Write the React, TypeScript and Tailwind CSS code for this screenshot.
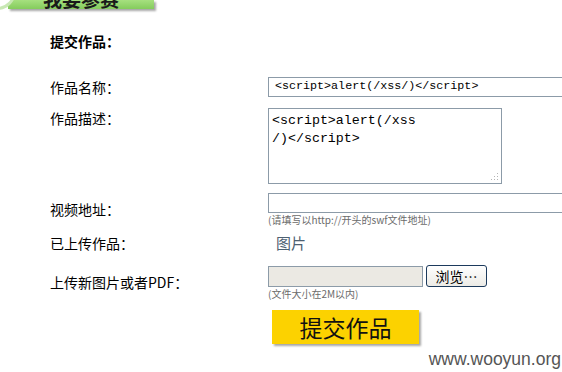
import React from "react";

const cjk = { fontFamily: '"SimSun", "Noto Sans CJK SC", sans-serif' };
const mono = { fontFamily: '"Liberation Mono", "Noto Sans CJK SC", monospace' };

function Row({ className, label, children }: { className: string; label: React.ReactNode; children: React.ReactNode }) {
  return (
    <div className={`grid grid-cols-[218px_1fr] ${className}`}>
      {label}
      {children}
    </div>
  );
}

function Label({ children }: { children: React.ReactNode }) {
  return <div className="flex items-center text-[14px] text-black">{children}</div>;
}

function Hint({ children }: { children: React.ReactNode }) {
  return <div className="mt-[1px] text-[10px] leading-[12px] text-[#6b6b6b]">{children}</div>;
}

export default function App() {
  return (
    <div className="relative h-[372px] w-[562px] overflow-hidden bg-white" style={cjk}>
      {/* TOP BANNER (cut off) */}
      <div className="relative h-[14px]">
        <div className="ml-[8px] h-[9px] w-[146px] overflow-hidden bg-gradient-to-b from-[#a6e07f] to-[#84cc5c] shadow-[2px_2px_2px_rgba(0,0,0,0.35)]">
          <div className="mt-[-11px] text-center text-[19px] font-bold leading-[20px] text-[#1a1a1a]">
            我要参赛
          </div>
        </div>
        <div className="absolute left-[-22px] top-[-30px] h-[40px] w-[38px] rounded-full border-[3px] border-[#c9e8b5] bg-white" />
      </div>

      {/* FORM */}
      <div className="pl-[50px]">
        <div className="mt-[19px] text-[14px] font-bold leading-[16px] text-black">提交作品：</div>

        <Row className="mt-[28px]" label={<Label>作品名称：</Label>}>
          <div
            className="flex h-[20px] w-[300px] items-center border border-[#8c9ba8] px-[6px] text-[11.7px] text-black"
            style={mono}
          >
            &lt;script&gt;alert(/xss/)&lt;/script&gt;
          </div>
        </Row>

        <Row
          className="mt-[10px]"
          label={<div className="pt-[1px] text-[14px] leading-[18px] text-black">作品描述：</div>}
        >
          <div
            className="relative h-[76px] w-[234px] border border-[#8c9ba8] px-[3px] pt-[3px] text-[13.3px] leading-[18px] text-black"
            style={mono}
          >
            &lt;script&gt;alert(/xss
            <br />
            /)&lt;/script&gt;
            <svg className="absolute bottom-[2px] right-[2px]" width="9" height="9" viewBox="0 0 9 9">
              <g fill="#b5b5b5">
                <rect x="7" y="1" width="1" height="1" />
                <rect x="4" y="4" width="1" height="1" />
                <rect x="7" y="4" width="1" height="1" />
                <rect x="1" y="7" width="1" height="1" />
                <rect x="4" y="7" width="1" height="1" />
                <rect x="7" y="7" width="1" height="1" />
              </g>
            </svg>
          </div>
        </Row>

        <Row className="mt-[9px]" label={<Label>视频地址：</Label>}>
          <div>
            <div className="h-[20px] w-[300px] border border-[#8c9ba8]" />
            <Hint>(请填写以http://开头的swf文件地址)</Hint>
          </div>
        </Row>

        <Row className="mt-[7px]" label={<Label>已上传作品：</Label>}>
          <div className="pl-[8px] text-[15px] leading-[20px] text-[#4d6172]">图片</div>
        </Row>

        <Row className="mt-[11px]" label={<Label>上传新图片或者PDF：</Label>}>
          <div>
            <div className="flex items-center gap-[3px]">
              <div className="h-[21px] w-[155px] border border-[#8c9ba8] bg-[#ebe9e3]" />
              <button className="flex h-[22px] w-[61px] items-center justify-center rounded-[3px] border border-[#1c3a5c] bg-gradient-to-b from-white to-[#ecebe6] text-[14px] leading-none text-black">
                浏览…
              </button>
            </div>
            <Hint>(文件大小在2M以内)</Hint>
          </div>
        </Row>

        <Row className="mt-[10px]" label={<div />}>
          <div className="pl-[4px]">
            <button
              className="flex h-[34px] w-[147px] items-center justify-center bg-[#fcd200] text-[23px] leading-none text-[#111] shadow-[2px_2px_2px_rgba(0,0,0,0.35)]"
              style={{ fontFamily: '"Noto Sans CJK SC", sans-serif' }}
            >
              提交作品
            </button>
          </div>
        </Row>
      </div>

      {/* WATERMARK */}
      <div
        className="absolute bottom-[3px] right-[1px] text-[17.5px] leading-[20px] text-[#555]"
        style={{ fontFamily: '"Liberation Sans", Arial, sans-serif' }}
      >
        www.wooyun.org
      </div>
    </div>
  );
}
